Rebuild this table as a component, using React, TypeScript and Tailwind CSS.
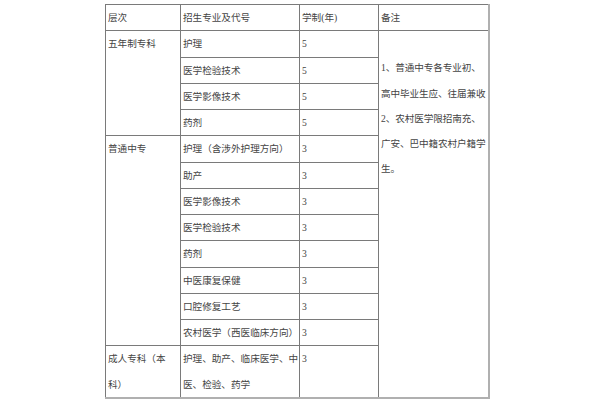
import React from "react"

const rows: { level?: string; levelSpan?: number; major: React.ReactNode; years: string }[] = [
  { level: "五年制专科", levelSpan: 4, major: "护理", years: "5" },
  { major: "医学检验技术", years: "5" },
  { major: "医学影像技术", years: "5" },
  { major: "药剂", years: "5" },
  { level: "普通中专", levelSpan: 8, major: "护理（含涉外护理方向）", years: "3" },
  { major: "助产", years: "3" },
  { major: "医学影像技术", years: "3" },
  { major: "医学检验技术", years: "3" },
  { major: "药剂", years: "3" },
  { major: "中医康复保健", years: "3" },
  { major: "口腔修复工艺", years: "3" },
  { major: "农村医学（西医临床方向）", years: "3" },
]

const cell = "border border-[#7a7a7a] align-top p-0 pl-[2px] leading-[25.25px] whitespace-nowrap overflow-hidden"

export default function App() {
  return (
    <div
      className="w-[600px] h-[400px] bg-white pt-[4px] pl-[105px] text-[#444] text-[9.6px]"
      style={{ fontFamily: '"Liberation Serif", "Noto Sans CJK SC", serif' }}
    >
      <table className="table-fixed border-collapse border-t border-l border-[#8a8a8a] border-r-2 border-b-2 border-r-[#b0b0b0] border-b-[#b0b0b0]">
        <colgroup>
          <col className="w-[75px]" />
          <col className="w-[119px]" />
          <col className="w-[79px]" />
          <col className="w-[110px]" />
        </colgroup>
        <tbody>
          <tr>
            <td className={cell}>层次</td>
            <td className={cell}>招生专业及代号</td>
            <td className={cell}>学制(年)</td>
            <td className={cell}>备注</td>
          </tr>
          {rows.map((r, i) => (
            <tr key={i}>
              {r.level && (
                <td className={cell} rowSpan={r.levelSpan}>
                  {r.level}
                </td>
              )}
              <td className={cell}>{r.major}</td>
              <td className={cell}>{r.years}</td>
              {i === 0 && (
                <td className={cell + " pt-[24px] tracking-[-0.1px]"} rowSpan={13}>
                  1、普通中专各专业初、
                  <br />
                  高中毕业生应、往届兼收
                  <br />
                  2、农村医学限招南充、
                  <br />
                  广安、巴中籍农村户籍学
                  <br />
                  生。
                </td>
              )}
            </tr>
          ))}
          <tr>
            <td className={cell}>
              成人专科（本
              <br />
              科）
            </td>
            <td className={cell}>
              护理、助产、临床医学、中
              <br />
              医、检验、药学
            </td>
            <td className={cell}>3</td>
          </tr>
        </tbody>
      </table>
    </div>
  )
}
